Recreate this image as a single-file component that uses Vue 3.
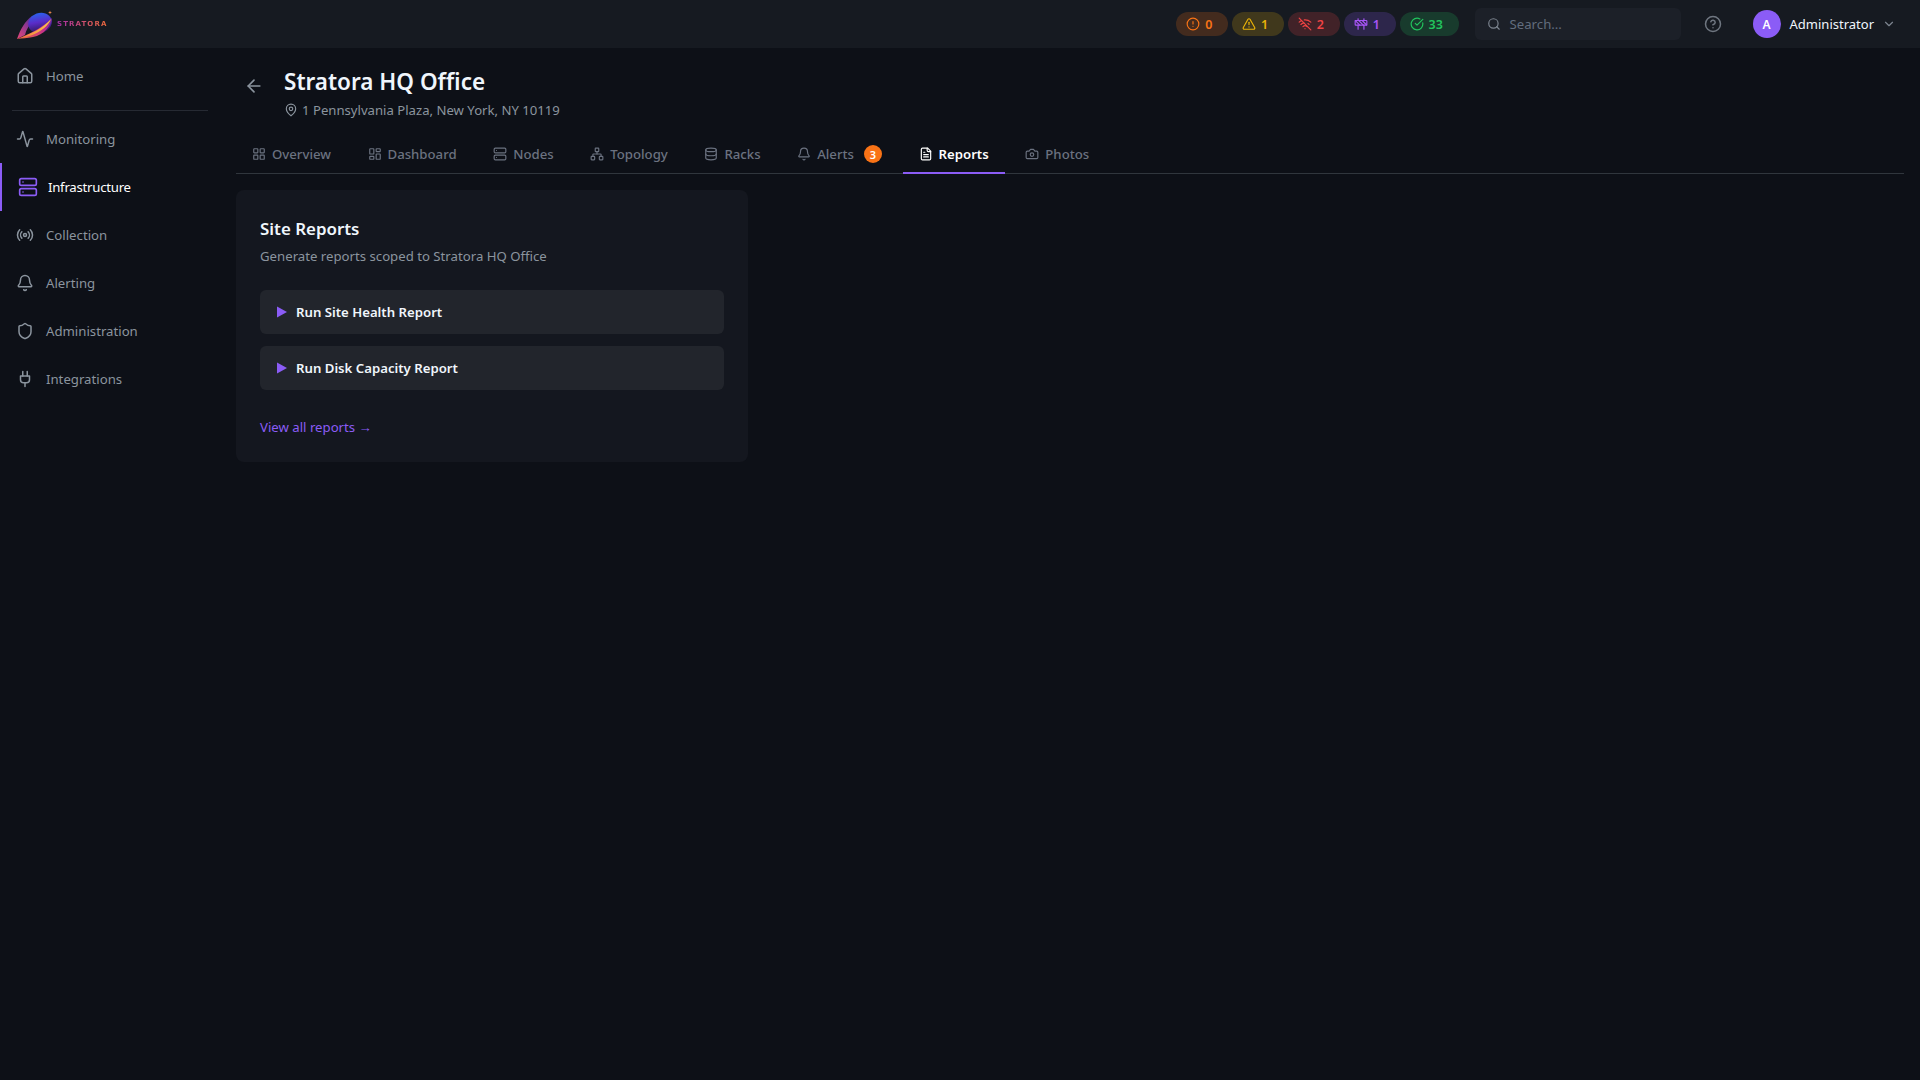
<script setup>
const I = {
  home: '<path d="M15 21v-8a1 1 0 0 0-1-1h-4a1 1 0 0 0-1 1v8"/><path d="M3 10a2 2 0 0 1 .709-1.528l7-5.999a2 2 0 0 1 2.582 0l7 5.999A2 2 0 0 1 21 10v9a2 2 0 0 1-2 2H5a2 2 0 0 1-2-2z"/>',
  activity: '<path d="M22 12h-2.48a2 2 0 0 0-1.93 1.46l-2.35 8.36a.25.25 0 0 1-.48 0L9.24 2.18a.25.25 0 0 0-.48 0l-2.35 8.36A2 2 0 0 1 4.49 12H2"/>',
  server: '<rect x="2" y="2" width="20" height="8" rx="2"/><rect x="2" y="14" width="20" height="8" rx="2"/><path d="M6 6h.01"/><path d="M6 18h.01"/>',
  radio: '<path d="M4.9 19.1C1 15.2 1 8.8 4.9 4.9"/><path d="M7.8 16.2c-2.3-2.3-2.3-6.1 0-8.5"/><circle cx="12" cy="12" r="2"/><path d="M16.2 7.8c2.3 2.3 2.3 6.1 0 8.5"/><path d="M19.1 4.9C23 8.8 23 15.1 19.1 19"/>',
  bell: '<path d="M10.268 21a2 2 0 0 0 3.464 0"/><path d="M3.262 15.326A1 1 0 0 0 4 17h16a1 1 0 0 0 .74-1.673C19.41 13.956 18 12.499 18 8A6 6 0 0 0 6 8c0 4.499-1.411 5.956-2.738 7.326"/>',
  shield: '<path d="M20 13c0 5-3.5 7.5-7.66 8.95a1 1 0 0 1-.67-.01C7.5 20.5 4 18 4 13V6a1 1 0 0 1 1-1c2 0 4.5-1.2 6.24-2.72a1.17 1.17 0 0 1 1.52 0C14.51 3.81 17 5 19 5a1 1 0 0 1 1 1z"/>',
  plug: '<path d="M12 22v-5"/><path d="M9 8V2"/><path d="M15 8V2"/><path d="M18 8v5a4 4 0 0 1-4 4h-4a4 4 0 0 1-4-4V8Z"/>',
  grid: '<rect width="7" height="7" x="3" y="3" rx="1"/><rect width="7" height="7" x="14" y="3" rx="1"/><rect width="7" height="7" x="14" y="14" rx="1"/><rect width="7" height="7" x="3" y="14" rx="1"/>',
  dash: '<rect width="7" height="9" x="3" y="3" rx="1"/><rect width="7" height="5" x="14" y="3" rx="1"/><rect width="7" height="9" x="14" y="12" rx="1"/><rect width="7" height="5" x="3" y="16" rx="1"/>',
  network: '<rect x="16" y="16" width="6" height="6" rx="1"/><rect x="2" y="16" width="6" height="6" rx="1"/><rect x="9" y="2" width="6" height="6" rx="1"/><path d="M5 16v-3a1 1 0 0 1 1-1h12a1 1 0 0 1 1 1v3"/><path d="M12 12V8"/>',
  db: '<ellipse cx="12" cy="5" rx="9" ry="3"/><path d="M3 5V19A9 3 0 0 0 21 19V5"/><path d="M3 12A9 3 0 0 0 21 12"/>',
  file: '<path d="M15 2H6a2 2 0 0 0-2 2v16a2 2 0 0 0 2 2h12a2 2 0 0 0 2-2V7Z"/><path d="M14 2v4a2 2 0 0 0 2 2h4"/><path d="M10 9H8"/><path d="M16 13H8"/><path d="M16 17H8"/>',
  camera: '<path d="M14.5 4h-5L7 7H4a2 2 0 0 0-2 2v9a2 2 0 0 0 2 2h16a2 2 0 0 0 2-2V9a2 2 0 0 0-2-2h-3l-2.5-3z"/><circle cx="12" cy="13" r="3"/>',
  pin: '<path d="M20 10c0 6-8 12-8 12s-8-6-8-12a8 8 0 0 1 16 0Z"/><circle cx="12" cy="10" r="3"/>',
  back: '<path d="m12 19-7-7 7-7"/><path d="M19 12H5"/>',
  alert: '<circle cx="12" cy="12" r="10"/><line x1="12" x2="12" y1="8" y2="12"/><line x1="12" x2="12.01" y1="16" y2="16"/>',
  tri: '<path d="m21.73 18-8-14a2 2 0 0 0-3.48 0l-8 14A2 2 0 0 0 4 21h16a2 2 0 0 0 1.73-3"/><path d="M12 9v4"/><path d="M12 17h.01"/>',
  wifi: '<path d="M12 20h.01"/><path d="M8.5 16.429a5 5 0 0 1 7 0"/><path d="M5 12.859a10 10 0 0 1 5.17-2.69"/><path d="M19 12.859a10 10 0 0 0-2.007-1.523"/><path d="M2 8.82a15 15 0 0 1 4.177-2.643"/><path d="M22 8.82a15 15 0 0 0-11.288-3.764"/><path d="m2 2 20 20"/>',
  cons: '<rect x="2" y="6" width="20" height="8" rx="1"/><path d="M17 14v7"/><path d="M7 14v7"/><path d="M17 3v3"/><path d="M7 3v3"/><path d="M10 14 2.3 6.3"/><path d="m14 6 7.7 7.7"/><path d="m8 6 8 8"/>',
  check: '<path d="M21.801 10A10 10 0 1 1 17 3.335"/><path d="m9 11 3 3L22 4"/>',
  search: '<path d="m21 21-4.34-4.34"/><circle cx="11" cy="11" r="8"/>',
  help: '<circle cx="12" cy="12" r="10"/><path d="M9.09 9a3 3 0 0 1 5.83 1c0 2-3 3-3 3"/><path d="M12 17h.01"/>',
  chev: '<path d="m6 9 6 6 6-6"/>',
}
const pills = [
  { icon: I.alert, n: 0, cls: 'orange' },
  { icon: I.tri, n: 1, cls: 'yellow' },
  { icon: I.wifi, n: 2, cls: 'red' },
  { icon: I.cons, n: 1, cls: 'purple' },
  { icon: I.check, n: 33, cls: 'green' },
]
const nav = [
  { icon: I.activity, label: 'Monitoring' },
  { icon: I.server, label: 'Infrastructure', active: true },
  { icon: I.radio, label: 'Collection' },
  { icon: I.bell, label: 'Alerting' },
  { icon: I.shield, label: 'Administration' },
  { icon: I.plug, label: 'Integrations' },
]
const tabs = [
  { icon: I.grid, label: 'Overview' },
  { icon: I.dash, label: 'Dashboard' },
  { icon: I.server, label: 'Nodes' },
  { icon: I.network, label: 'Topology' },
  { icon: I.db, label: 'Racks' },
  { icon: I.bell, label: 'Alerts', badge: 3 },
  { icon: I.file, label: 'Reports', active: true },
  { icon: I.camera, label: 'Photos' },
]
const reports = ['Run Site Health Report', 'Run Disk Capacity Report']
</script>

<template>
  <div class="app">
    <header class="topbar">
      <div class="logo">
        <svg class="logo-mark" viewBox="0 0 36 30" width="36" height="30">
          <defs>
            <linearGradient id="planet" x1="0.6" y1="0" x2="0.4" y2="1">
              <stop offset="0" stop-color="#2a62ee" />
              <stop offset="0.45" stop-color="#5a2cc8" />
              <stop offset="1" stop-color="#2a1550" />
            </linearGradient>
            <linearGradient id="wedge" x1="0" y1="1" x2="1" y2="0">
              <stop offset="0" stop-color="#e8487a" />
              <stop offset="1" stop-color="#4a2aa0" />
            </linearGradient>
            <linearGradient id="under" x1="0" y1="1" x2="1" y2="0">
              <stop offset="0" stop-color="#f06a3c" />
              <stop offset="0.6" stop-color="#c32f8c" />
              <stop offset="1" stop-color="#7a2a9c" />
            </linearGradient>
            <linearGradient id="band" x1="0" y1="1" x2="1" y2="0">
              <stop offset="0" stop-color="#f2803a" />
              <stop offset="1" stop-color="#fbd24e" />
            </linearGradient>
          </defs>
          <path d="M0 29C3 20 8 11 15 6L17 10C12 15 9 20 8 25Z" fill="url(#wedge)" />
          <ellipse cx="23" cy="13" rx="12" ry="10" transform="rotate(-20 23 13)" fill="url(#planet)" />
          <path d="M0 29C10 25 24 19 35 8C34 16 27 25 16 27C10 28 5 28.500 0 29Z" fill="url(#under)" />
          <path d="M3 28C14 24 26 18 34 9C32 15 24 22 14 25.500C10 26.500 6 27.500 3 28Z" fill="url(#band)" />
          <path d="M33 0.500l.5 1.500 1.500.5-1.500.5-.5 1.500-.5-1.500-1.500-.5 1.500-.5z" fill="#f08a4b" />
        </svg>
        <span class="logo-text">STRATORA</span>
      </div>
      <div class="top-right">
        <div class="pills">
          <div v-for="(p, i) in pills" :key="i" class="pill" :class="p.cls">
            <svg class="ic" viewBox="0 0 24 24" width="14" height="14" v-html="p.icon"></svg>
            <span>{{ p.n }}</span>
          </div>
        </div>
        <div class="search">
          <svg class="ic" viewBox="0 0 24 24" width="14" height="14" v-html="I.search"></svg>
          <span>Search...</span>
        </div>
        <svg class="ic help" viewBox="0 0 24 24" width="18" height="18" v-html="I.help"></svg>
        <div class="user">
          <div class="avatar">A</div>
          <span class="uname">Administrator</span>
          <svg class="ic chev" viewBox="0 0 24 24" width="14" height="14" v-html="I.chev"></svg>
        </div>
      </div>
    </header>
    <div class="body">
      <aside class="sidebar">
        <a class="nav-item">
          <svg class="ic" viewBox="0 0 24 24" width="18" height="18" v-html="I.home"></svg>
          <span>Home</span>
        </a>
        <div class="sep"></div>
        <a v-for="n in nav" :key="n.label" class="nav-item" :class="{ active: n.active }">
          <svg class="ic" viewBox="0 0 24 24" :width="n.active ? 20 : 18" :height="n.active ? 20 : 18" v-html="n.icon"></svg>
          <span>{{ n.label }}</span>
        </a>
      </aside>
      <main class="main">
        <div class="page-head">
          <button class="back">
            <svg class="ic" viewBox="0 0 24 24" width="20" height="20" v-html="I.back"></svg>
          </button>
          <div>
            <h1>Stratora HQ Office</h1>
            <div class="addr">
              <svg class="ic" viewBox="0 0 24 24" width="14" height="14" v-html="I.pin"></svg>
              <span>1 Pennsylvania Plaza, New York, NY 10119</span>
            </div>
          </div>
        </div>
        <nav class="tabs">
          <a v-for="t in tabs" :key="t.label" class="tab" :class="{ active: t.active }">
            <svg class="ic" viewBox="0 0 24 24" width="14" height="14" v-html="t.icon"></svg>
            <span>{{ t.label }}</span>
            <span v-if="t.badge" class="badge">{{ t.badge }}</span>
          </a>
        </nav>
        <section class="card">
          <h2>Site Reports</h2>
          <p>Generate reports scoped to Stratora HQ Office</p>
          <div class="actions">
            <button v-for="r in reports" :key="r" class="run">
              <svg viewBox="0 0 10 12" width="10" height="12"><path d="M0 0.500 10 6 0 11.500Z" fill="#8b5cf6" /></svg>
              <span>{{ r }}</span>
            </button>
          </div>
          <a class="link">View all reports <span class="arrow">→</span></a>
        </section>
      </main>
    </div>
  </div>
</template>

<style>
html, body { margin: 0; background: #0d1117; }
</style>

<style scoped>
* { box-sizing: border-box; }
.app {
  width: 100%;
  min-height: 1080px;
  background: #0d1017;
  color: #fff;
  font-family: "Noto Sans", "Open Sans", sans-serif;
  font-size: 13.2px;
}
.ic { fill: none; stroke: currentColor; stroke-width: 2; stroke-linecap: round; stroke-linejoin: round; flex: none; }
.topbar {
  height: 48px;
  background: #161a21;
  display: flex;
  align-items: center;
  justify-content: space-between;
  padding: 0 24px 0 17px;
}
.logo { display: flex; align-items: center; gap: 4px; }
.logo-mark { margin-top: 1px; }
.logo-text {
  font: 700 7px/1 "DejaVu Sans", sans-serif;
  letter-spacing: 1.1px;
  background: linear-gradient(90deg, #a32ea8, #ef6a3c);
  -webkit-background-clip: text;
  background-clip: text;
  color: transparent;
}
.top-right { display: flex; align-items: center; }
.pills { display: flex; gap: 4px; }
.pill {
  height: 24px;
  padding: 0 15.7px 0 10px;
  border-radius: 12px;
  display: flex;
  align-items: center;
  gap: 5px;
  font-size: 12.5px;
  font-weight: 600;
}
.orange { background: rgba(249, 115, 22, 0.2); color: #f97316; }
.yellow { background: rgba(234, 179, 8, 0.2); color: #eab308; }
.red { background: rgba(239, 68, 68, 0.2); color: #ef4444; }
.purple { background: rgba(139, 92, 246, 0.2); color: #a855f7; }
.green { background: rgba(34, 197, 94, 0.2); color: #22c55e; }
.search {
  margin-left: 16px;
  width: 206px;
  height: 32px;
  background: #1c2028;
  border-radius: 6px;
  display: flex;
  align-items: center;
  gap: 9px;
  padding-left: 12px;
  color: #626d7d;
}
.search .ic { color: #7d8590; }
.help { margin-left: 23px; color: #6f7680; }
.user { margin-left: 31px; display: flex; align-items: center; }
.avatar {
  width: 28px;
  height: 28px;
  border-radius: 50%;
  background: #8b5cf6;
  display: flex;
  align-items: center;
  justify-content: center;
  font-size: 12px;
  font-weight: 600;
}
.uname { margin-left: 9px; color: #f0f6fc; font-size: 13px; }
.chev { margin-left: 8px; color: #7d8590; }
.body { display: flex; }
.sidebar { width: 220px; flex: none; padding-top: 4px; }
.nav-item {
  height: 48px;
  display: flex;
  align-items: center;
  gap: 12px;
  padding-left: 16px;
  color: #8b949e;
}
.nav-item.active {
  border-left: 2px solid #8b5cf6;
  color: #fff;
  gap: 10px;
  letter-spacing: -0.25px;
}
.nav-item.active .ic { color: #8b5cf6; }
.sep { height: 1px; margin: 10px 12px 4px; background: #262a33; }
.main { flex: 1; padding: 18px 16px 16px 16px; min-width: 0; }
.page-head { display: flex; align-items: flex-start; gap: 12px; height: 68px; }
.back {
  width: 36px;
  height: 36px;
  margin-top: 2px;
  background: none;
  border: 0;
  padding: 0;
  color: #8b949e;
  display: flex;
  align-items: center;
  justify-content: center;
}
h1 { margin: 0; font-size: 22.5px; line-height: 32px; font-weight: 600; color: #f0f6fc; }
.addr { display: flex; align-items: center; gap: 4px; margin-top: 2px; line-height: 20px; color: #8b949e; font-size: 13.15px; }
.tabs { display: flex; gap: 4.6px; height: 40px; border-bottom: 1px solid #30363d; }
.tab {
  position: relative;
  height: 40px;
  display: flex;
  align-items: center;
  gap: 6px;
  padding: 0 16px;
  color: #6b7280;
  font-weight: 500;
}
.tab.active { color: #fff; font-weight: 600; box-shadow: inset 0 -2px 0 #8b5cf6; }
.tab.active .ic { color: #fff; }
.badge {
  width: 18px;
  height: 18px;
  margin-left: 4px;
  border-radius: 50%;
  background: #f97316;
  color: #fff;
  font-size: 11px;
  font-weight: 600;
  display: flex;
  align-items: center;
  justify-content: center;
}
.card {
  margin-top: 16px;
  width: 512px;
  height: 272px;
  padding: 24px;
  background: #14171f;
  border-radius: 8px;
}
h2 { margin: 0; font-size: 16.9px; line-height: 29px; font-weight: 600; color: #f0f6fc; }
p { margin: 3px 0 0; line-height: 20px; color: #8b949e; }
.actions { margin-top: 24px; display: flex; flex-direction: column; gap: 12px; }
.run {
  height: 44px;
  background: #22252c;
  border: 0;
  border-radius: 6px;
  display: flex;
  align-items: center;
  gap: 9px;
  padding: 0 17px;
  color: #f0f6fc;
  font: 600 13.2px "Noto Sans", sans-serif;
}
.link { display: block; margin-top: 27px; color: #8b5cf6; line-height: 20px; }
.arrow { font-family: "Liberation Sans", sans-serif; }
</style>
